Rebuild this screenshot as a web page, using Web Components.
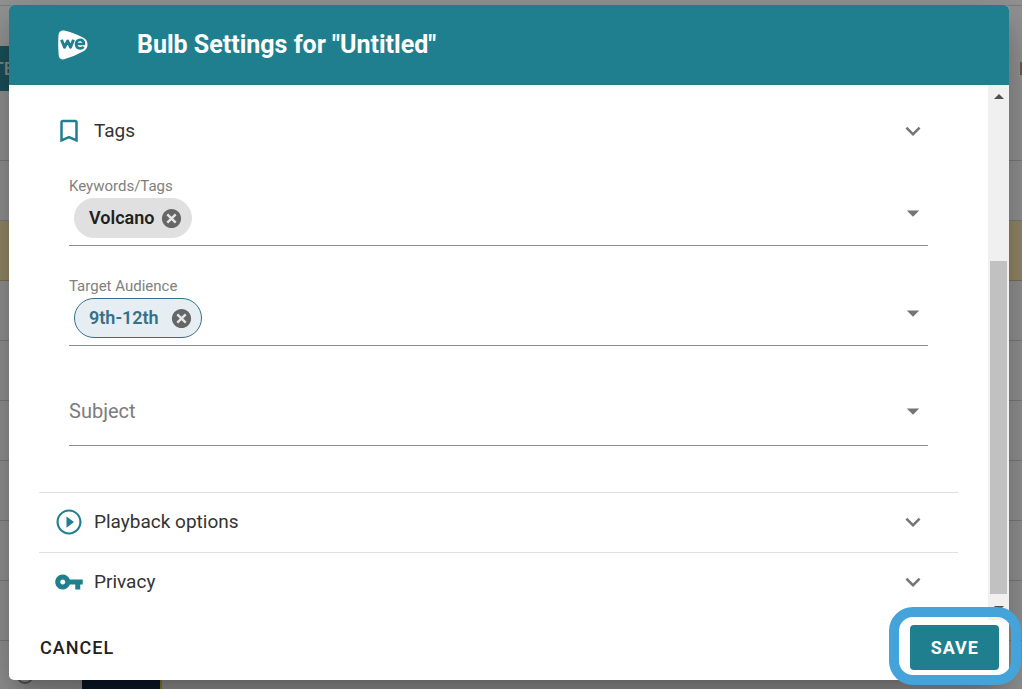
<!DOCTYPE html>
<html lang="en">
<head>
<meta charset="utf-8">
<title>Bulb Settings</title>
<style>
  html, body { margin: 0; min-height: 100%; }
  body { font-family: Roboto, "Open Sans", sans-serif; color: #212121; }
</style>
</head>
<body>
<settings-screen></settings-screen>
<script>
const define = (name, html, setup) => {
  const template = document.createElement('template');
  template.innerHTML = html;
  customElements.define(name, class extends HTMLElement {
    connectedCallback() {
      if (this.shadowRoot) return;
      const content = template.content.cloneNode(true);
      if (setup) setup(this, content);
      this.attachShadow({ mode: 'open' }).append(content);
    }
  });
};

const ICONS = {
  bookmark: '<path fill="currentColor" d="M17 3H7c-1.100 0-2 .9-2 2v16l7-3 7 3V5c0-1.100-.9-2-2-2zm0 15-5-2.180L7 18V5h10v13z"/>',
  play: '<path fill="currentColor" d="M10 16.500l6-4.500-6-4.500v9zM12 2C6.480 2 2 6.480 2 12s4.480 10 10 10 10-4.480 10-10S17.520 2 12 2zm0 18.300c-4.580 0-8.300-3.720-8.300-8.300s3.720-8.300 8.300-8.300 8.300 3.720 8.300 8.300-3.720 8.300-8.300 8.300z"/>',
  key: '<path fill="currentColor" d="M12.650 10C11.830 7.670 9.610 6 7 6c-3.310 0-6 2.690-6 6s2.690 6 6 6c2.610 0 4.830-1.670 5.650-4H17v4h4v-4h2v-4H12.650zM7 14c-1.100 0-2-.9-2-2s.9-2 2-2 2 .9 2 2-.9 2-2 2z"/>',
  chevron: '<path fill="currentColor" d="M7.410 8.590 12 13.170l4.590-4.580L18 10l-6 6-6-6z"/>',
  caret: '<path fill="currentColor" d="M7 10l5 5 5-5z"/>',
  cancel: '<path fill="currentColor" d="M12 2C6.470 2 2 6.470 2 12s4.470 10 10 10 10-4.470 10-10S17.530 2 12 2z"/><path fill="none" stroke="#e4e6e8" stroke-width="2.500" d="M7.600 7.600l8.800 8.800M16.400 7.600l-8.800 8.800"/>'
};

define('ui-icon', `
<style>
  :host { display: inline-flex; width: 30px; height: 30px; flex: none; }
  :host([name="caret"]), :host([name="chevron"]) { color: #757575; pointer-events: none; }
  :host([name="cancel"]) { width: 23px; height: 23px; }
  svg { width: 100%; height: 100%; display: block; }
</style>
<svg viewBox="0 0 24 24" aria-hidden="true"></svg>`,
(host, root) => { root.querySelector('svg').innerHTML = ICONS[host.getAttribute('name')]; });

define('brand-mark', `
<style>
  :host { display: block; width: 30px; height: 30px; flex: none; }
  svg { display: block; width: 30px; height: 30px; }
</style>
<svg viewBox="0 0 30 30" aria-hidden="true">
  <path fill="#fff" d="M.5 5Q1 0 6 .5Q14 2 25 7.500Q29.500 9.500 29.500 14.500Q29.500 19 25 21.500Q15 27 6 29.300Q1 30 .7 25Q-.2 15 .5 5z"/>
  <path fill="none" stroke="#207f8f" stroke-width="3" stroke-linejoin="round" d="M3.500 9.800l3 7.400 3.200-6.200 2.800 6.200 3-7.400"/>
  <path fill="none" stroke="#207f8f" stroke-width="2.700" d="M18 14h7.800c0-2.600-1.600-4.200-3.700-4.200s-4 1.700-4 4.300 1.600 4.200 4.100 4.200c1.400 0 2.500-.4 3.500-1.500"/>
</svg>`);

define('page-behind', `
<style>
  :host { display: block; overflow: hidden; background: #949494; color: #8f8a86; }
  .top { height: 5px; border-bottom: 1px solid #7e7e7e; }
  .bar { height: 45px; display: flex; align-items: center; justify-content: space-between; margin-top: 40px; }
  .tab { width: 14px; height: 100%; background: #1b525b; overflow: hidden; display: flex; align-items: center; justify-content: flex-end; font-size: 18px; font-weight: 500; }
  .edge { width: 2px; height: 13px; background: #705b50; }
  .row { height: 60px; box-sizing: border-box; border-bottom: 1px solid #7c7c7c; }
  .first { height: 70px; }
  .mark { background: #968a68; border-color: #7d7252; }
  .media { display: flex; height: 60px; }
  .dot { width: 14px; height: 14px; border: 2px solid #555; border-radius: 50%; margin: 25px 48px 0 16px; }
  .thumb { width: 78px; background: #0c1828; border-right: 2px solid #85801c; }
</style>
<div class="top"></div>
<div class="bar"><span class="tab">TE</span><span class="edge"></span></div>
<div class="row first"></div><div class="row"></div><div class="row mark"></div>
<div class="row"></div><div class="row"></div><div class="row"></div><div class="row"></div><div class="row"></div><div class="row"></div>
<div class="media"><span class="dot"></span><span class="thumb"></span></div>`);

define('settings-section', `
<style>
  :host { display: block; border-top: 1px solid #e0e0e0; }
  :host([first]) { border-color: transparent; }
  h2 { margin: 0; padding-bottom: 1px; font: inherit; }
  button { display: flex; align-items: center; width: 100%; height: 58px; border: 0; background: none; padding: 0 30px 0 15px; font: 400 19px/24px Roboto, sans-serif; color: #333; text-align: left; }
  .name { flex: 1; margin-left: 10px; }
  .lead { color: #207f8f; }
  .fields { display: flex; flex-direction: column; gap: 15px; }
  :host([first]) .fields { padding-bottom: 46px; }
</style>
<h2><button type="button"><ui-icon class="lead"></ui-icon><span class="name"></span><ui-icon name="chevron"></ui-icon></button></h2>
<div class="fields"><slot></slot></div>`,
(host, root) => {
  root.querySelector('.lead').setAttribute('name', host.getAttribute('icon'));
  root.querySelector('.name').textContent = host.getAttribute('heading');
  root.querySelector('button').setAttribute('aria-expanded', String(host.hasAttribute('first')));
});

define('tag-chip', `
<style>
  :host { display: inline-flex; align-items: center; box-sizing: border-box; height: 40px; border: 1px solid #e0e0e0; border-radius: 20px; background: #e0e0e0; color: #212121; padding: 0 8px 0 14px; font-size: 18px; font-weight: 600; line-height: 24px; }
  :host([selected]) { background: #e6eef3; border-color: #376f88; color: #376f88; }
  button { display: flex; border: 0; padding: 0; margin-left: 6px; background: none; color: #666; }
  :host([selected]) button { margin-left: 11px; }
</style>
<slot></slot><button type="button" aria-label="Remove"><ui-icon name="cancel"></ui-icon></button>`);

define('chip-field', `
<style>
  :host { display: block; box-sizing: border-box; height: 85px; margin: 0 30px; padding-top: 15px; border-bottom: 1px solid #8c8c8c; }
  label { display: block; font-size: 15px; line-height: 20px; color: #808080; }
  .line { display: flex; align-items: center; margin-top: 2px; padding-left: 5px; }
  input { flex: 1; min-width: 0; height: 28px; border: 0; outline: 0; padding: 0 8px; background: none; font: 400 18px Roboto, sans-serif; }
  ui-icon { align-self: flex-start; }
</style>
<label for="entry"></label>
<div class="line"><slot></slot><input id="entry" type="text" role="combobox" aria-expanded="false"><ui-icon name="caret"></ui-icon></div>`,
(host, root) => { root.querySelector('label').textContent = host.getAttribute('label'); });

define('select-field', `
<style>
  :host { display: grid; align-items: center; box-sizing: border-box; height: 85px; margin: 0 30px; padding-top: 15px; border-bottom: 1px solid #8c8c8c; }
  select, ui-icon { grid-area: 1 / 1; }
  select { appearance: none; width: 100%; height: 40px; border: 0; padding: 0; background: none; font: 400 20px/24px Roboto, sans-serif; color: #7c7c7c; }
  ui-icon { justify-self: end; }
</style>
<select aria-label="Subject"><option>Subject</option></select><ui-icon name="caret"></ui-icon>`);

define('scroll-rail', `
<style>
  :host { display: flex; flex-direction: column; align-items: center; width: 21px; flex: none; background: #f0f0f0; padding: 9px 0; box-sizing: border-box; }
  .up, .down { border: 5px solid transparent; width: 0; height: 0; }
  .up { border-top: 0; border-bottom-color: #505050; }
  .down { border-bottom: 0; border-top-color: #505050; }
  .before { flex: 162; }
  .thumb { flex: 333; width: 17px; background: #c1c1c1; }
  .after { flex: 12; }
</style>
<span class="up"></span><span class="before"></span><span class="thumb"></span><span class="after"></span><span class="down"></span>`);

define('action-button', `
<style>
  :host { display: block; }
  button { display: block; height: 45px; border: 0; border-radius: 4px; background: none; padding: 0; color: #212121; font: 500 18px/24px Roboto, sans-serif; letter-spacing: 1px; }
  :host([primary]) button { background: #207f8f; color: #fff; padding: 0 20px 0 21px; font-weight: 700; }
  :host([primary]) { border: 10px solid #44a4d9; border-radius: 24px; padding: 8px 12px 5px 11px; }
</style>
<button type="button"><slot></slot></button>`);

define('settings-dialog', `
<style>
  :host { display: flex; flex-direction: column; background: #fff; border-radius: 5px; box-shadow: 0 14px 19px -9px #0003, 0 30px 48px 4px #00000024, 0 12px 58px 10px #0000001f; }
  header { display: flex; align-items: center; gap: 49px; height: 80px; flex: none; padding-left: 49px; background: #207f8f; color: #fff; border-radius: 5px 5px 0 0; }
  h1 { margin: 0; font-size: 25px; line-height: 32px; font-weight: 700; }
  .body { flex: 1; display: flex; }
  .content { flex: 1; min-width: 0; padding: 16px 30px 8px; }
  footer { display: flex; align-items: center; justify-content: space-between; height: 55px; padding: 0 0 5px 31px; flex: none; }
  .save { margin: -13px -12px -10px 0; position: relative; z-index: 1; }
</style>
<header><brand-mark></brand-mark><h1>Bulb Settings for "Untitled"</h1></header>
<div class="body">
  <div class="content">
    <settings-section first icon="bookmark" heading="Tags">
      <chip-field label="Keywords/Tags"><tag-chip>Volcano</tag-chip></chip-field>
      <chip-field label="Target Audience"><tag-chip selected>9th-12th</tag-chip></chip-field>
      <select-field></select-field>
    </settings-section>
    <settings-section icon="play" heading="Playback options"></settings-section>
    <settings-section icon="key" heading="Privacy"></settings-section>
  </div>
  <scroll-rail></scroll-rail>
</div>
<footer>
  <action-button>CANCEL</action-button>
  <action-button class="save" primary>SAVE</action-button>
</footer>`);

define('settings-screen', `
<style>
  :host { display: grid; position: relative; min-height: 100vh; overflow: hidden; }
  page-behind { position: absolute; inset: 0; }
  settings-dialog { position: relative; margin: 5px 13px 9px 9px; }
</style>
<page-behind></page-behind>
<settings-dialog role="dialog" aria-label="Bulb Settings"></settings-dialog>`);
</script>
</body>
</html>
